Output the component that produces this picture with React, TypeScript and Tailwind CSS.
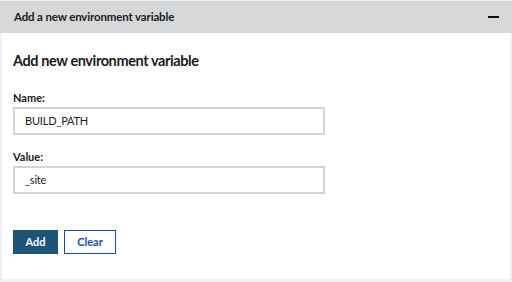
import React from "react";

export default function App() {
  return (
    <div className="w-[512px] h-[282px] bg-white" style={{ fontFamily: 'Lato, "Liberation Sans", sans-serif' }}>
      <div className="h-[282px] border-t border-[#f0f0f0] flex flex-col">
        <div className="h-[32px] bg-[#d6d7d9] flex items-center justify-between pl-[14px] pr-[13px]">
          <span className="text-[11.5px] font-bold text-[#1b1b1b] leading-[16px] tracking-[-0.15px]">Add a new environment variable</span>
          <span className="block w-[11px] h-[2.5px] bg-[#111]" />
        </div>
        <div className="flex-1 border-x-[2px] border-b-[3px] border-[#f0f0f0] pl-[11px] pt-[18px]">
          <h2 className="text-[14.5px] font-bold text-[#1b1b1b] leading-[20px] tracking-[-0.4px]">Add new environment variable</h2>
          <div className="mt-[20px] text-[11px] font-bold text-[#1b1b1b] leading-[14px]">Name:</div>
          <div className="mt-[2px] w-[312px] h-[28px] border-[2px] border-[#d4d4d4] flex items-center pl-[10px] text-[11px] tracking-[-0.2px] text-[#1b1b1b]">BUILD_PATH</div>
          <div className="mt-[15px] text-[11px] font-bold text-[#1b1b1b] leading-[14px]">Value:</div>
          <div className="mt-[2px] w-[312px] h-[28px] border-[2px] border-[#d4d4d4] flex items-center pl-[10px] text-[11px] tracking-[-0.2px] text-[#1b1b1b]">_site</div>
          <div className="mt-[36px] flex gap-[6px]">
            <div className="w-[45px] h-[24px] bg-[#1f5479] text-white text-[11px] font-bold flex items-center justify-center">Add</div>
            <div className="w-[52px] h-[24px] border-[1.5px] border-[#1a4d9e] text-[#1a4d9e] text-[11px] font-bold flex items-center justify-center">Clear</div>
          </div>
        </div>
      </div>
    </div>
  );
}
